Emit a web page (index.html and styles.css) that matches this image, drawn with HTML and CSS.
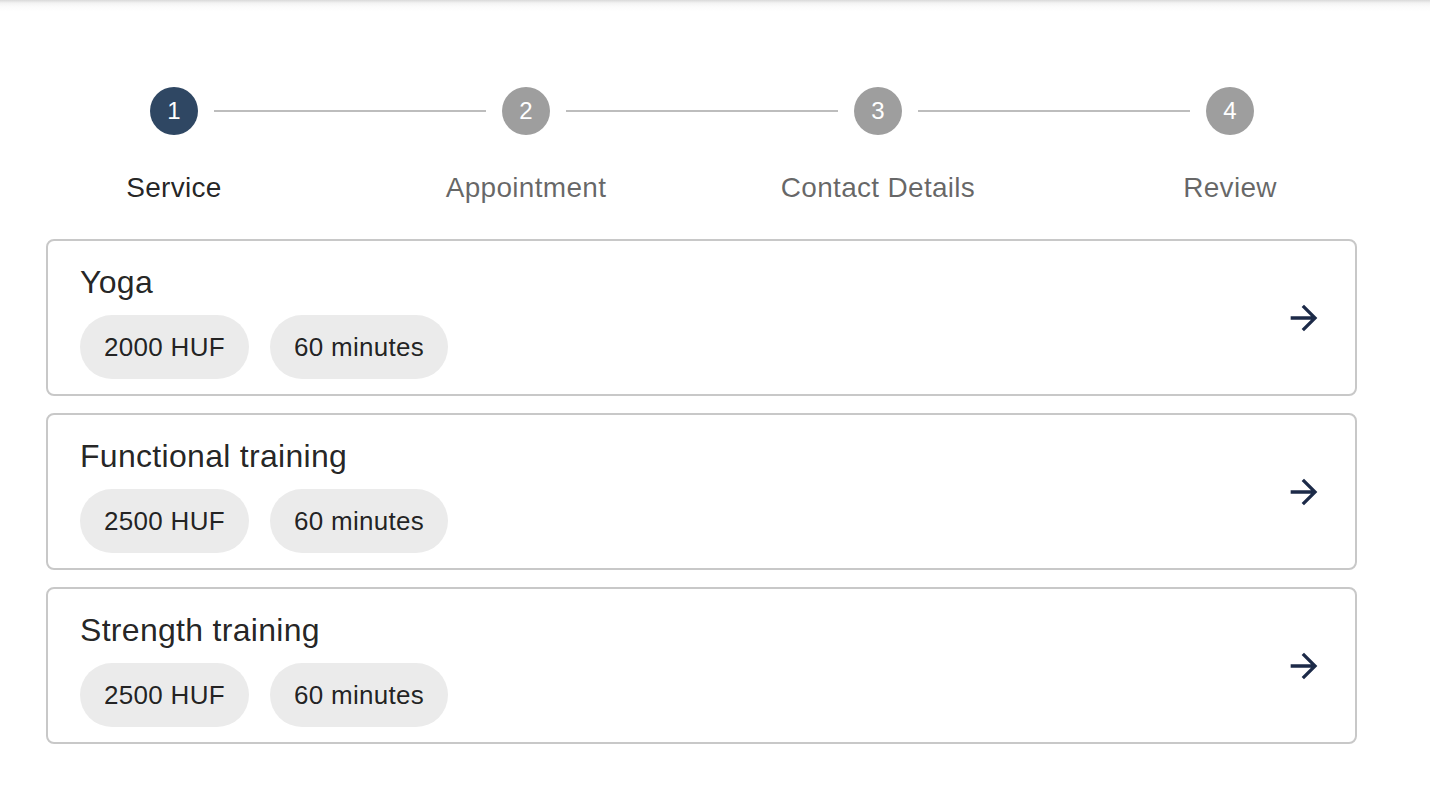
FILE: index.html
```html
<!DOCTYPE html>
<html lang="en">
<head>
<meta charset="utf-8">
<title>Booking</title>
<link rel="stylesheet" href="styles.css">
</head>
<body>
<div class="topbar"></div>
<div class="stepper">
  <div class="step active">
    <div class="step-head"><span class="seg hidden"></span><span class="dot">1</span><span class="seg"></span></div>
    <div class="label">Service</div>
  </div>
  <div class="step">
    <div class="step-head"><span class="seg"></span><span class="dot">2</span><span class="seg"></span></div>
    <div class="label">Appointment</div>
  </div>
  <div class="step">
    <div class="step-head"><span class="seg"></span><span class="dot">3</span><span class="seg"></span></div>
    <div class="label">Contact Details</div>
  </div>
  <div class="step">
    <div class="step-head"><span class="seg"></span><span class="dot">4</span><span class="seg hidden"></span></div>
    <div class="label">Review</div>
  </div>
</div>
<div class="cards">
  <div class="card">
    <div class="card-body">
      <div class="title">Yoga</div>
      <div class="chips"><span class="chip">2000 HUF</span><span class="chip">60 minutes</span></div>
    </div>
    <button class="go" aria-label="Select"><svg viewBox="0 0 24 24"><path d="M12 4l-1.41 1.41L16.17 11H4v2h12.17l-5.58 5.59L12 20l8-8z"/></svg></button>
  </div>
  <div class="card">
    <div class="card-body">
      <div class="title">Functional training</div>
      <div class="chips"><span class="chip">2500 HUF</span><span class="chip">60 minutes</span></div>
    </div>
    <button class="go" aria-label="Select"><svg viewBox="0 0 24 24"><path d="M12 4l-1.41 1.41L16.17 11H4v2h12.17l-5.58 5.59L12 20l8-8z"/></svg></button>
  </div>
  <div class="card">
    <div class="card-body">
      <div class="title">Strength training</div>
      <div class="chips"><span class="chip">2500 HUF</span><span class="chip">60 minutes</span></div>
    </div>
    <button class="go" aria-label="Select"><svg viewBox="0 0 24 24"><path d="M12 4l-1.41 1.41L16.17 11H4v2h12.17l-5.58 5.59L12 20l8-8z"/></svg></button>
  </div>
</div>
</body>
</html>
```
FILE: styles.css
```css
* { box-sizing: border-box; }
html, body { margin: 0; padding: 0; background: #fff; }
body {
  font-family: "Liberation Sans", Arial, Helvetica, sans-serif;
  color: rgba(0, 0, 0, 0.87);
  letter-spacing: 0.3px;
  width: 1430px;
  height: 792px;
  overflow: hidden;
}
.topbar {
  height: 12px;
  background: linear-gradient(to bottom, #d9d9d9 0px, #f3f3f3 3px, #fcfcfc 7px, #ffffff 12px);
}
.stepper {
  display: flex;
  width: 1408px;
  margin-left: -2px;
  padding-top: 75px;
}
.step {
  flex: 1;
  display: flex;
  flex-direction: column;
  align-items: stretch;
}
.step-head {
  display: flex;
  align-items: center;
  height: 48px;
}
.seg {
  flex: 1;
  height: 2px;
  background: #bdbdbd;
}
.seg.hidden { visibility: hidden; }
.dot {
  width: 48px;
  height: 48px;
  border-radius: 50%;
  margin: 0 16px;
  background: #9e9e9e;
  color: #fff;
  font-size: 24px;
  letter-spacing: 0;
  display: flex;
  align-items: center;
  justify-content: center;
  flex: none;
}
.step.active .dot { background: #2f4763; }
.label {
  margin-top: 33px;
  text-align: center;
  font-size: 28px;
  line-height: 40px;
  color: rgba(0, 0, 0, 0.6);
}
.step.active .label { color: rgba(0, 0, 0, 0.87); }
.cards {
  margin: 31px 0 0 46px;
  width: 1311px;
  display: flex;
  flex-direction: column;
  gap: 17px;
}
.card {
  border: 2px solid #c8c8c8;
  border-radius: 8px;
  padding: 15px 15px 15px 32px;
  display: flex;
  align-items: center;
  height: 157px;
}
.card-body { flex: 1; }
.title {
  font-size: 32px;
  line-height: 48px;
  padding-top: 2px;
  color: rgba(0, 0, 0, 0.87);
}
.chips {
  display: flex;
  gap: 21px;
  margin-top: 9px;
}
.chip {
  height: 64px;
  padding: 0 24px;
  border-radius: 32px;
  background: #ebebeb;
  font-size: 26px;
  display: flex;
  align-items: center;
  color: rgba(0, 0, 0, 0.87);
}
.go {
  width: 72px;
  height: 72px;
  padding: 16px;
  border: 0;
  background: transparent;
  border-radius: 50%;
  display: flex;
  align-items: center;
  justify-content: center;
}
.go svg { width: 40px; height: 40px; fill: #1c2a48; }
```
